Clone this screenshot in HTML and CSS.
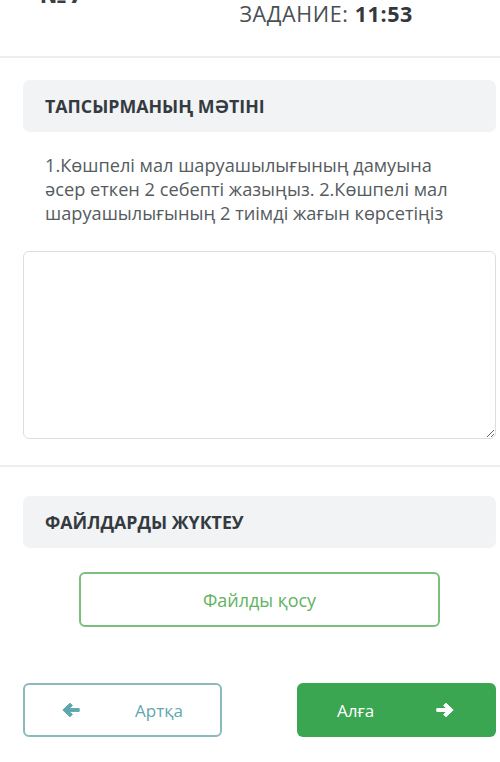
FILE: index.html
```html
<!DOCTYPE html>
<html lang="kk">
<head>
<meta charset="utf-8">
<title>Тапсырма</title>
<link rel="stylesheet" href="styles.css">
</head>
<body>
<header class="top">
  <div class="num">№7</div>
  <div class="timer">ЗАДАНИЕ: <b>11:53</b></div>
</header>
<main class="content">
  <section class="block">
    <div class="block-head">ТАПСЫРМАНЫҢ МӘТІНІ</div>
    <p class="task">1.Көшпелі мал шаруашылығының дамуына әсер еткен 2 себепті жазыңыз. 2.Көшпелі мал шаруашылығының 2 тиімді жағын көрсетіңіз</p>
    <textarea class="answer"></textarea>
  </section>
</main>
<div class="divider"></div>
<main class="content">
  <section class="block block-files">
    <div class="block-head">ФАЙЛДАРДЫ ЖҮКТЕУ</div>
    <div class="files-row"><button class="btn-files">Файлды қосу</button></div>
  </section>
  <nav class="nav">
    <button class="btn btn-back">
      <svg class="arrow" viewBox="0 0 18 16" width="18" height="16"><path d="M0.8 8 L8 1.2 L10.4 3.6 L7 6.6 H17.2 V9.4 H7 L10.4 12.4 L8 14.8 Z" fill="currentColor" stroke="currentColor" stroke-width="1" stroke-linejoin="round"/></svg>
      <span>Артқа</span>
    </button>
    <button class="btn btn-next">
      <span>Алға</span>
      <svg class="arrow" viewBox="0 0 18 16" width="18" height="16"><path d="M17.2 8 L10 1.2 L7.6 3.6 L11 6.6 H0.8 V9.4 H11 L7.6 12.4 L10 14.8 Z" fill="currentColor" stroke="currentColor" stroke-width="1" stroke-linejoin="round"/></svg>
    </button>
  </nav>
</main>
</body>
</html>
```
FILE: styles.css
```css
html, body {
  margin: 0;
  padding: 0;
  background: #ffffff;
}
body {
  font-family: "Open Sans", "Noto Sans", sans-serif;
  color: #333;
  overflow: hidden;
  width: 500px;
  height: 762px;
}
.top {
  display: flex;
  height: 56px;
  border-bottom: 2px solid #eceeef;
  overflow: hidden;
}
.num {
  margin-left: 40px;
  margin-top: -21px;
  font-size: 26px;
  font-weight: 700;
  line-height: 28px;
  color: #3a3f44;
  letter-spacing: 2px;
}
.timer {
  margin-left: auto;
  margin-right: 87px;
  font-size: 21.5px;
  line-height: 28px;
  color: #4a4f54;
  letter-spacing: 0.6px;
}
.timer b {
  font-weight: 700;
  color: #33383d;
}
.content {
  padding: 0 4px 0 23px;
}
.block {
  padding-top: 22px;
}
.block-head {
  height: 52px;
  background: #f1f3f5;
  border-radius: 7px;
  display: flex;
  align-items: center;
  padding-left: 22px;
  font-size: 17.8px;
  font-weight: 700;
  color: #343a40;
}
.task {
  margin: 21px 0 0 0;
  padding-left: 22px;
  padding-right: 30px;
  font-size: 18.2px;
  line-height: 24px;
  color: #555b60;
}
.answer {
  display: block;
  box-sizing: border-box;
  width: 100%;
  height: 188px;
  margin-top: 26px;
  border: 1px solid #dcdfe2;
  border-radius: 6px;
  background: #fff;
  font-family: inherit;
}
.divider {
  margin-top: 26px;
  height: 2px;
  background: #eceeef;
}
.block-files {
  padding-top: 29px;
}
.files-row {
  padding: 24px 0 0 56px;
}
.btn-files {
  box-sizing: border-box;
  width: 361px;
  height: 55px;
  border: 2px solid #7cbf7c;
  border-radius: 6px;
  background: #fff;
  color: #62b262;
  font-family: inherit;
  font-size: 18px;
  display: block;
}
.nav {
  display: flex;
  justify-content: space-between;
  margin-top: 56px;
}
.btn {
  box-sizing: border-box;
  width: 199px;
  height: 54px;
  border-radius: 6px;
  font-family: inherit;
  font-size: 17px;
  display: flex;
  align-items: center;
}
.btn-back {
  border: 2px solid #8ab9bf;
  background: #fff;
  color: #5fa7ad;
  padding-left: 37px;
}
.btn-back span {
  margin-left: 55px;
}
.btn-next {
  border: none;
  background: #3aa652;
  color: #ffffff;
  padding-left: 40px;
}
.btn-next .arrow {
  margin-left: 62px;
}
.arrow {
  display: block;
}
```
